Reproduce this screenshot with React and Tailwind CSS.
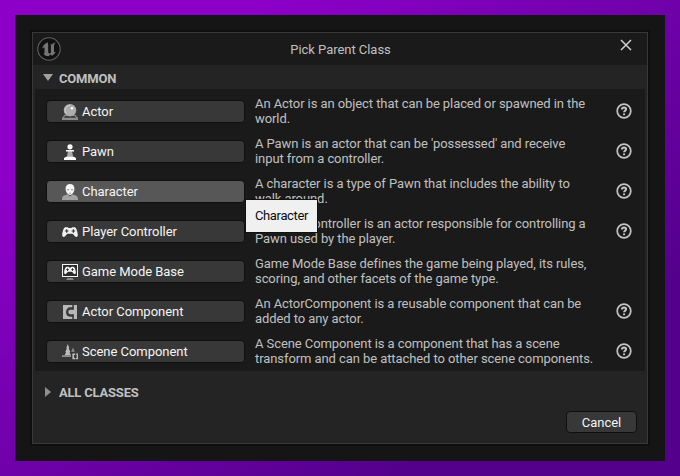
import React, { useState } from 'react';
import clsx from 'clsx';

const ActorIcon = () => (
    <svg viewBox="0 0 16 16" className="h-4 w-4">
        <path d="M2.6 10.8h10.8L16 14v2H0v-2z" fill="#8c8c8c" />
        <path d="M3.2 12h9.6l1.4 1.8H1.8z" fill="#3a3a3a" />
        <circle cx="8" cy="6.2" r="6.2" fill="#adadad" />
        <path d="M8 1.2a5 5 0 0 0-3.600 8.400" fill="none" stroke="#d0d0d0" strokeWidth="1" />
        <circle cx="10" cy="4.2" r="1.2" fill="#fff" />
    </svg>
);

const PawnIcon = () => (
    <svg viewBox="0 0 16 16" className="h-4 w-4">
        <path d="M6.2 6h3.6l1.4 7H4.8z" fill="#a8a8a8" />
        <circle cx="8" cy="2.8" r="2.6" fill="#fff" />
        <path d="M4 5.900h8v1.500H4zM4.200 12.800h7.600l2.200 1.200V16H2v-2z" fill="#fff" />
    </svg>
);

const CharacterIcon = () => (
    <svg viewBox="0 0 16 16" className="h-4 w-4">
        <path d="M5.5 10.2 8 12.4l2.5-2.2 3.800 1.600c1 .5 1.700 1.600 1.700 4.200H0c0-2.600.7-3.700 1.700-4.200z" fill="#a2a2a2" />
        <path d="M8 0c2.900 0 4.400 1.900 4.400 4.600 0 2.800-1.700 6.400-4.400 6.400S3.600 7.400 3.600 4.600C3.600 1.900 5.100 0 8 0z" fill="#f4f4f4" />
        <path d="M5 5.300h2v1H5zM9 5.300h2v1H9zM7 8.800h2v.7H7z" fill="#8a8a8a" />
    </svg>
);

const PadShape = ({ hole }) => (
    <>
        <path d="M3.400 3.200h2.200c.6 0 .9.8 1.400.8h2c.5 0 .8-.8 1.400-.8h2.200c1.800 0 3.200 5.200 3.200 7.600 0 1.500-.6 2.200-1.600 2.200-1.500 0-2.500-3.300-4-3.300H5.800c-1.500 0-2.500 3.300-4 3.300-1 0-1.600-.7-1.600-2.200 0-2.400 1.400-7.600 3.200-7.600z" fill="#f2f2f2" />
        <path d="M4.100 5.200h1.200v1.200h1.200v1.200H5.300v1.200H4.100V7.600H2.900V6.400h1.200zM10.800 5.200H12v1.200h1.200v1.200H12v1.200h-1.200V7.600H9.600V6.400h1.200z" fill={hole} />
    </>
);

const ControllerIcon = () => (
    <svg viewBox="0 0 16 16" className="h-4 w-4">
        <PadShape hole="#383838" />
    </svg>
);

const GameModeIcon = () => (
    <svg viewBox="0 0 16 16" className="h-4 w-4">
        <path d="M.5.500h15v12H.5z" fill="#2a2a2a" stroke="#f2f2f2" strokeWidth="1.100" />
        <g transform="translate(2 .4) scale(.75)">
            <PadShape hole="#2a2a2a" />
        </g>
        <path d="M5.500 14.200h5L12 15.800H4z" fill="#a0a0a0" />
    </svg>
);

const ActorComponentIcon = () => (
    <svg viewBox="0 0 16 16" className="h-4 w-4">
        <path d="M1 1h14v14H1z" fill="#b8b8b8" />
        <path d="M11.500 4.500H8.200C6.400 4.500 5.200 5.800 5.200 8s1.200 3.500 3 3.500h3.300" fill="none" stroke="#383838" strokeWidth="2.300" />
        <path d="M10.300 1h1.500v4.500h-1.500zM10.300 10.500h1.500V15h-1.500z" fill="#383838" />
    </svg>
);

const SceneComponentIcon = () => (
    <svg viewBox="0 0 16 16" className="h-4 w-4">
        <path d="M5.800 0 7.300 4l-.6.300L8.300 8l-.8.300 1.700 3.200H2.400l1.700-3.200-.8-.3 1.600-3.700-.6-.3z" fill="#bcbcbc" />
        <path d="M11 3.600l1.800 4.200h-3.600zM0 11.200h9v1.800H0z" fill="#8e8e8e" />
        <path d="M9.600 8.600H16V16H9.600z" fill="#383838" />
        <path d="M13 9.400h-2.600v5.800H13v-1.400h-1v-2.900h1zM13.700 9.400H16v5.800h-2.300v-1.200h1v-3.400h-1z" fill="#c0c0c0" />
    </svg>
);

const HelpIcon = () => (
    <svg viewBox="0 0 16 16" className="h-4 w-4" fill="none" stroke="#c4c4c4">
        <circle cx="8" cy="8" r="6.800" strokeWidth="1.700" />
        <path d="M5.900 6.500C5.900 5.100 6.800 4.500 8 4.500s2.100.7 2.100 1.800c0 1.300-2 1.400-2 3" strokeWidth="2" />
        <path d="M7.100 10.400h2v1.800h-2z" fill="#c4c4c4" stroke="none" />
    </svg>
);

const UnrealLogo = () => (
    <svg viewBox="0 0 24 24" className="h-6 w-6">
        <circle cx="12" cy="12" r="11.200" fill="#101010" stroke="#606060" strokeWidth="1.100" />
        <path
            d="M11 5.200C8 6.100 5.700 8.500 5 11.800c.7-.9 1.500-1.500 2-1.300.4.1.5.5.5 1v4.300c0 .8-.4 1-1.100.9 1.200 1.700 3.100 2.500 5.200 2.500l1.700-1.700 1.700 1.300c1.700-.9 3-2.200 3.800-4.300-.6.6-1.200.9-1.500.7-.3-.1-.3-.4-.3-.8V8.500c0-1 .8-2.100 1.800-3-1.500.2-3 1-4 2.100-.4-.3-.9-.4-1.400-.3.400.3.500.7.500 1.200v7.200c-.4.500-.9.700-1.400.7-.8 0-1.300-.5-1.300-1.400V8.400c0-1.300-.5-2.200-.2-3.200z"
            fill="#747474"
        />
    </svg>
);

const CLASSES = [
    { name: 'Actor', icon: ActorIcon, help: true, lines: ['An Actor is an object that can be placed or spawned in the', 'world.'] },
    { name: 'Pawn', icon: PawnIcon, help: true, lines: ["A Pawn is an actor that can be 'possessed' and receive", 'input from a controller.'] },
    { name: 'Character', icon: CharacterIcon, help: true, lines: ['A character is a type of Pawn that includes the ability to', 'walk around.'] },
    { name: 'Player Controller', icon: ControllerIcon, help: true, lines: ['A Player Controller is an actor responsible for controlling a', 'Pawn used by the player.'] },
    { name: 'Game Mode Base', icon: GameModeIcon, help: false, lines: ['Game Mode Base defines the game being played, its rules,', 'scoring, and other facets of the game type.'] },
    { name: 'Actor Component', icon: ActorComponentIcon, help: true, lines: ['An ActorComponent is a reusable component that can be', 'added to any actor.'] },
    { name: 'Scene Component', icon: SceneComponentIcon, help: true, lines: ['A Scene Component is a component that has a scene', 'transform and can be attached to other scene components.'] },
];

const ClassRow = ({ item, hovered, onPick }) => {
    const Icon = item.icon;
    return (
        <div className="flex h-10 items-center">
            <div className="relative pt-px">
                <button
                    onClick={() => onPick(item.name)}
                    className={clsx(
                        'flex h-[23px] w-[199px] items-center gap-1 rounded-[4px] border border-[#0f0f0f] pl-[15px] tracking-[-0.04px] text-[#f5f5f5]',
                        hovered ? 'bg-[#575757]' : 'bg-[#383838]'
                    )}
                >
                    <Icon />
                    <span className="pt-px whitespace-nowrap">{item.name}</span>
                </button>
                {hovered && (
                    <div className="absolute top-[21px] left-[200px] z-10 flex h-[32px] w-[71px] items-center justify-center bg-[#f0f0f0] tracking-[-0.35px] text-[#0c0c0c] shadow-[0_0_0_1px_#111]">
                        {item.name}
                    </div>
                )}
            </div>
            <div className="ml-[10px] flex-1 leading-[15px] text-[#c0c0c0]">
                {item.lines.map(line => (
                    <p key={line} className="whitespace-nowrap">{line}</p>
                ))}
            </div>
            {item.help && <HelpIcon />}
        </div>
    );
};

const App = () => {
    const [picked, setPicked] = useState('Character');

    return (
        <div className="h-[476px] w-[680px] bg-linear-to-br from-[#8c00c8] from-20% to-[#54008c] to-80% p-[15px] font-[Roboto,sans-serif] text-[13px] tracking-[-0.08px]">
            <div className="h-[446px] w-[650px] bg-[#151515] pt-[17px] pl-[17px]">
                <div className="flex h-[412px] w-[616px] flex-col border border-[#383838] bg-[#242424] shadow-[0_0_0_2px_#0f0f0f]">
                    {/* Title bar */}
                    <div className="flex h-8 shrink-0 items-start bg-[#1a1a1a] pt-1 pr-[15px] pl-1">
                        <UnrealLogo />
                        <span className="flex-1 pt-[3px] text-center leading-5 tracking-[-0.04px] text-[#c0c0c0]">Pick Parent Class</span>
                        <svg viewBox="0 0 12 12" className="mt-[2px] h-3 w-3" fill="none" stroke="#d0d0d0" strokeWidth="1.500">
                            <path d="M1 1l10 10M11 1L1 11" />
                        </svg>
                    </div>

                    {/* Common classes */}
                    <div className="flex h-6 shrink-0 items-center gap-[6px] pt-[3px] pl-[10px] font-bold tracking-[-0.2px] text-[#c0c0c0]">
                        <svg viewBox="0 0 10 7" className="mb-[2px] h-[7px] w-[10px]">
                            <path d="M0 0h10L5 7z" fill="#a0a0a0" />
                        </svg>
                        COMMON
                    </div>
                    <div className="mx-[2px] h-[282px] shrink-0 bg-[#1a1a1a] pt-[2px] pr-[13px] pl-[11px]">
                        {CLASSES.map(item => (
                            <ClassRow key={item.name} item={item} hovered={picked === item.name} onPick={setPicked} />
                        ))}
                    </div>

                    {/* All classes, collapsed */}
                    <div className="mt-[10px] flex h-6 shrink-0 items-center gap-2 pl-[12px] font-bold tracking-[-0.2px] text-[#c0c0c0]">
                        <svg viewBox="0 0 6 10" className="mb-[2px] h-[10px] w-[6px]">
                            <path d="M0 0v10l6-5z" fill="#909090" />
                        </svg>
                        ALL CLASSES
                    </div>
                    <div className="mt-[6px] flex justify-end pr-[10px]">
                        <button className="h-[22px] w-[71px] rounded-[4px] border border-[#0f0f0f] bg-[#383838] pt-px tracking-[0px] text-[#f5f5f5]">Cancel</button>
                    </div>
                </div>
            </div>
        </div>
    );
};

export default App;
